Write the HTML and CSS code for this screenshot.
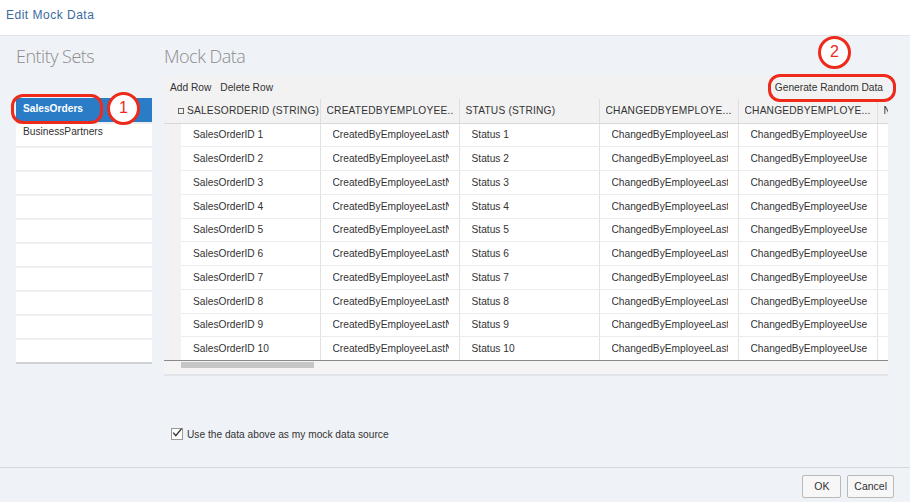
FILE: index.html
```html
<!DOCTYPE html>
<html>
<head>
<meta charset="utf-8">
<link rel="stylesheet" href="styles.css">
</head>
<body>
<header class="topbar">Edit Mock Data</header>
<main class="content">
  <aside class="entities">
    <h2 class="section-title">Entity Sets</h2>
    <ul class="entity-list">
      <li class="entity selected">SalesOrders</li>
      <li class="entity">BusinessPartners</li>
      <li class="entity"></li>
      <li class="entity"></li>
      <li class="entity"></li>
      <li class="entity"></li>
      <li class="entity"></li>
      <li class="entity"></li>
      <li class="entity"></li>
      <li class="entity"></li>
      <li class="entity"></li>
    </ul>
  </aside>
  <section class="mock">
    <h2 class="section-title">Mock Data</h2>
    <div class="grid-wrap">
      <div class="toolbar">
        <span class="tb-btn">Add Row</span>
        <span class="tb-btn">Delete Row</span>
        <span class="tb-spacer"></span>
        <span class="tb-btn">Generate Random Data</span>
      </div>
      <div class="table-clip">
        <table class="grid">
          <colgroup>
            <col class="c-sel"><col class="c1"><col class="c2"><col class="c3"><col class="c4"><col class="c5"><col class="c6">
          </colgroup>
          <thead>
            <tr>
              <th colspan="2" class="first-head"><span class="hbox"></span>SALESORDERID (STRING)</th>
              <th><div class="cell">CREATEDBYEMPLOYEE...</div></th>
              <th><div class="cell">STATUS (STRING)</div></th>
              <th><div class="cell">CHANGEDBYEMPLOYE...</div></th>
              <th><div class="cell">CHANGEDBYEMPLOYE...</div></th>
              <th><div class="cell">N</div></th>
            </tr>
          </thead>
          <tbody>
            <tr><td class="sel"></td><td><div class="cell">SalesOrderID 1</div></td><td><div class="cell">CreatedByEmployeeLastN</div></td><td><div class="cell">Status 1</div></td><td><div class="cell">ChangedByEmployeeLast</div></td><td><div class="cell">ChangedByEmployeeUse</div></td><td></td></tr>
            <tr><td class="sel"></td><td><div class="cell">SalesOrderID 2</div></td><td><div class="cell">CreatedByEmployeeLastN</div></td><td><div class="cell">Status 2</div></td><td><div class="cell">ChangedByEmployeeLast</div></td><td><div class="cell">ChangedByEmployeeUse</div></td><td></td></tr>
            <tr><td class="sel"></td><td><div class="cell">SalesOrderID 3</div></td><td><div class="cell">CreatedByEmployeeLastN</div></td><td><div class="cell">Status 3</div></td><td><div class="cell">ChangedByEmployeeLast</div></td><td><div class="cell">ChangedByEmployeeUse</div></td><td></td></tr>
            <tr><td class="sel"></td><td><div class="cell">SalesOrderID 4</div></td><td><div class="cell">CreatedByEmployeeLastN</div></td><td><div class="cell">Status 4</div></td><td><div class="cell">ChangedByEmployeeLast</div></td><td><div class="cell">ChangedByEmployeeUse</div></td><td></td></tr>
            <tr><td class="sel"></td><td><div class="cell">SalesOrderID 5</div></td><td><div class="cell">CreatedByEmployeeLastN</div></td><td><div class="cell">Status 5</div></td><td><div class="cell">ChangedByEmployeeLast</div></td><td><div class="cell">ChangedByEmployeeUse</div></td><td></td></tr>
            <tr><td class="sel"></td><td><div class="cell">SalesOrderID 6</div></td><td><div class="cell">CreatedByEmployeeLastN</div></td><td><div class="cell">Status 6</div></td><td><div class="cell">ChangedByEmployeeLast</div></td><td><div class="cell">ChangedByEmployeeUse</div></td><td></td></tr>
            <tr><td class="sel"></td><td><div class="cell">SalesOrderID 7</div></td><td><div class="cell">CreatedByEmployeeLastN</div></td><td><div class="cell">Status 7</div></td><td><div class="cell">ChangedByEmployeeLast</div></td><td><div class="cell">ChangedByEmployeeUse</div></td><td></td></tr>
            <tr><td class="sel"></td><td><div class="cell">SalesOrderID 8</div></td><td><div class="cell">CreatedByEmployeeLastN</div></td><td><div class="cell">Status 8</div></td><td><div class="cell">ChangedByEmployeeLast</div></td><td><div class="cell">ChangedByEmployeeUse</div></td><td></td></tr>
            <tr><td class="sel"></td><td><div class="cell">SalesOrderID 9</div></td><td><div class="cell">CreatedByEmployeeLastN</div></td><td><div class="cell">Status 9</div></td><td><div class="cell">ChangedByEmployeeLast</div></td><td><div class="cell">ChangedByEmployeeUse</div></td><td></td></tr>
            <tr class="last"><td class="sel"></td><td><div class="cell">SalesOrderID 10</div></td><td><div class="cell">CreatedByEmployeeLastN</div></td><td><div class="cell">Status 10</div></td><td><div class="cell">ChangedByEmployeeLast</div></td><td><div class="cell">ChangedByEmployeeUse</div></td><td></td></tr>
          </tbody>
        </table>
        <div class="hscroll"><div class="thumb"></div></div>
      </div>
    </div>
    <label class="check-row">
      <span class="checkbox"><svg width="12" height="12" viewBox="0 0 12 12"><path d="M2.2 5.6 L4.8 8.6 L10.6 1.6" fill="none" stroke="#333" stroke-width="1.4"/></svg></span>
      Use the data above as my mock data source
    </label>
  </section>
</main>
<footer class="footer">
  <button class="btn">OK</button>
  <button class="btn">Cancel</button>
</footer>

<div class="mark ring-1"></div>
<div class="mark badge badge-1">1</div>
<div class="mark ring-2"></div>
<div class="mark badge badge-2">2</div>
</body>
</html>
```
FILE: styles.css
```css
* { box-sizing: border-box; }
html, body { margin: 0; padding: 0; }
body {
  width: 910px;
  height: 502px;
  overflow: hidden;
  background: #eff2f7;
  font-family: "Liberation Sans", Arial, sans-serif;
  font-size: 10.2px;
  color: #333;
  position: relative;
}
.topbar {
  height: 36px;
  background: #fff;
  border-bottom: 1px solid #dfe3ea;
  padding-left: 6px;
  line-height: 30px;
  font-size: 12px;
  letter-spacing: 0.5px;
  color: #3b6aa0;
}
.content {
  display: flex;
  height: 431px;
  padding-left: 16px;
}
.section-title {
  margin: 0;
  height: 40px;
  line-height: 40px;
  font-size: 18px;
  font-weight: 300;
  color: #8c8c8c;
  font-family: "Open Sans", "Liberation Sans", sans-serif;
  letter-spacing: -0.5px;
}
.entities { width: 136px; }
.entity-list {
  list-style: none;
  margin: 22px 0 0;
  padding: 0;
  background: #fff;
  border-bottom: 2px solid #cfd3d8;
}
.entity {
  height: 24px;
  line-height: 16px;
  padding-left: 7px;
  border-top: 2px solid #eceef1;
  color: #333;
}
.entity:first-child { border-top: 0; line-height: 21px; }
.entity.selected {
  background: #2a7cc7;
  color: #fff;
  font-weight: bold;
}
.mock {
  margin-left: 12px;
  width: 724px;
  display: flex;
  flex-direction: column;
}
.grid-wrap { width: 724px; }
.toolbar {
  height: 23px;
  background: #f2f2f2;
  display: flex;
  align-items: center;
  padding: 0 5px 0 6px;
  gap: 9px;
}
.tb-spacer { flex: 1; }
.tb-btn { color: #333; }
.table-clip {
  width: 724px;
  overflow: hidden;
  background: #f4f4f4;
}
.grid {
  table-layout: fixed;
  border-collapse: collapse;
  width: 737px;
}
.c-sel { width: 17px; }
.c1 { width: 139px; }
.c2 { width: 139px; }
.c3 { width: 140px; }
.c4 { width: 139px; }
.c5 { width: 139px; }
.c6 { width: 24px; }
.cell {
  overflow: hidden;
  white-space: nowrap;
}
.grid th {
  height: 24px;
  background: #f2f2f2;
  font-weight: normal;
  text-align: left;
  padding: 0 6px;
  white-space: nowrap;
  overflow: hidden;
  border-left: 1px solid #dedede;
  border-bottom: 1px solid #d8d8d8;
  color: #333;
  letter-spacing: 0.2px;
}
.grid th.first-head { border-left: 0; padding-left: 14px; }
.hbox {
  display: inline-block;
  width: 6px;
  height: 6px;
  border: 1px solid #666;
  margin-right: 3px;
  vertical-align: 0px;
}
.grid td {
  height: 23.75px;
  background: #fff;
  padding: 0 10px 0 12px;
  white-space: nowrap;
  overflow: hidden;
  border-left: 1px solid #e2e2e2;
  border-bottom: 1px solid #ececec;
  color: #333;
}
.grid td.sel { background: #f2f2f2; border-left: 0; border-bottom-color: #f2f2f2; padding: 0; }
.grid td:nth-child(2) { border-left: 0; }
.grid td:nth-child(6) { padding-right: 8px; }
.grid td:last-child { padding: 0; }
.grid tr.last td { border-bottom: 1px solid #8a8a8a; }
.hscroll {
  height: 15px;
  background: #f4f4f4;
  border-bottom: 2px solid #e0e3e8;
  padding-left: 17px;
  padding-top: 1px;
}
.thumb {
  width: 133px;
  height: 6px;
  background: #c6c6c6;
}
.check-row {
  margin-top: 52px;
  margin-left: 7px;
  display: flex;
  align-items: center;
  gap: 4px;
  color: #333;
}
.checkbox {
  width: 12px;
  height: 12px;
  border: 1px solid #999;
  background: #fff;
  display: inline-flex;
  position: relative;
}
.checkbox svg { position: absolute; left: -1px; top: -2px; }
.footer {
  height: 35px;
  border-top: 1px solid #d6dae0;
  display: flex;
  justify-content: flex-end;
  align-items: center;
  gap: 6px;
  padding-right: 16px;
  padding-top: 2px;
}
.btn {
  height: 23px;
  min-width: 39px;
  padding: 0 6px;
  background: #f7f7f7;
  border: 1px solid #b9b9b9;
  border-radius: 2px;
  font-family: "Liberation Sans", Arial, sans-serif;
  font-size: 10.5px;
  color: #333;
}
.mark { position: absolute; pointer-events: none; }
.ring-1 {
  left: 11px; top: 94px; width: 92px; height: 30px;
  border: 3.5px solid #ee2a1b;
  border-radius: 12px;
}
.ring-2 {
  left: 768px; top: 74px; width: 128px; height: 28px;
  border: 3.5px solid #ee2a1b;
  border-radius: 12px;
}
.badge {
  width: 33px; height: 33px;
  border: 3.5px solid #ee2a1b;
  border-radius: 50%;
  background: #fff;
  color: #ee2a1b;
  font-family: "Liberation Sans", Arial, sans-serif;
  font-size: 16px;
  line-height: 26px;
  text-align: center;
}
.badge-1 { left: 107px; top: 92px; }
.badge-2 { left: 818px; top: 36px; }
```
